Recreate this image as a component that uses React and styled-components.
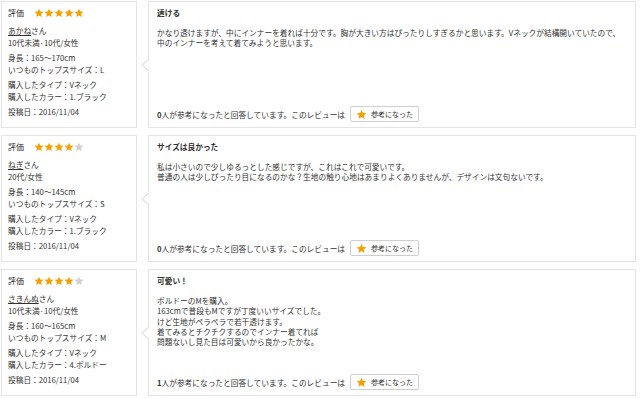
import React from "react";
import styled, { createGlobalStyle } from "styled-components";

const reviews = [
  {
    id: 1,
    rating: 5,
    name: "あかね",
    profile: "10代未満·10代/女性",
    height: "165〜170cm",
    size: "L",
    type: "Vネック",
    color: "1.ブラック",
    date: "2016/11/04",
    title: "透ける",
    body: [
      "かなり透けますが、中にインナーを着れば十分です。胸が大きい方はぴったりしすぎるかと思います。Vネックが結構開いていたので、",
      "中のインナーを考えて着てみようと思います。",
    ],
    helpful: 0,
  },
  {
    id: 2,
    rating: 4,
    name: "ねぎ",
    profile: "20代/女性",
    height: "140〜145cm",
    size: "S",
    type: "Vネック",
    color: "1.ブラック",
    date: "2016/11/04",
    title: "サイズは良かった",
    body: [
      "私は小さいので少しゆるっとした感じですが、これはこれで可愛いです。",
      "普通の人は少しぴったり目になるのかな？生地の触り心地はあまりよくありませんが、デザインは文句ないです。",
    ],
    helpful: 0,
  },
  {
    id: 3,
    rating: 4,
    name: "さきんぬ",
    profile: "10代未満·10代/女性",
    height: "160〜165cm",
    size: "M",
    type: "Vネック",
    color: "4.ボルドー",
    date: "2016/11/04",
    title: "可愛い！",
    body: [
      "ボルドーのMを購入。",
      "163cmで普段もMですが丁度いいサイズでした。",
      "けど生地がペラペラで若干透けます。",
      "着てみるとチクチクするのでインナー着てれば",
      "問題ないし見た目は可愛いから良かったかな。",
    ],
    helpful: 1,
  },
];

const Star = ({ size = 10, on = true }) => (
  <svg width={size} height={size} viewBox="0 0 24 24">
    <path
      d="M12 1.5l3.1 7.1 7.6.6-5.8 5 1.8 7.5L12 17.7l-6.7 4 1.8-7.5-5.8-5 7.6-.6z"
      fill={on ? "#f6a000" : "#d0d0d0"}
    />
  </svg>
);

const App = () => {
  return (
    <>
      <GlobalStyle />
      <StList>
        {reviews.map((r) => (
          <StRow key={r.id}>
            <StProfile>
              <StRating>
                <span>評価</span>
                <StStars>
                  {[1, 2, 3, 4, 5].map((n) => (
                    <Star key={n} on={n <= r.rating} />
                  ))}
                </StStars>
              </StRating>
              <StGroup $first>
                <div>
                  <StName href="#">{r.name}</StName>さん
                </div>
                <div>{r.profile}</div>
              </StGroup>
              <StGroup>
                <div>身長：{r.height}</div>
                <div>いつものトップスサイズ：{r.size}</div>
              </StGroup>
              <StGroup>
                <div>購入したタイプ：{r.type}</div>
                <div>購入したカラー：{r.color}</div>
              </StGroup>
              <StGroup>
                <div>投稿日：{r.date}</div>
              </StGroup>
            </StProfile>
            <StReview>
              <StTitle>{r.title}</StTitle>
              <StBody>
                {r.body.map((line, i) => (
                  <div key={i}>{line}</div>
                ))}
              </StBody>
              <StFooter>
                <span>
                  <b>{r.helpful}</b>人が参考になったと回答しています。このレビューは
                </span>
                <StHelpButton>
                  <Star size={11} />
                  <span>参考になった</span>
                </StHelpButton>
              </StFooter>
            </StReview>
          </StRow>
        ))}
      </StList>
    </>
  );
};

export default App;

const GlobalStyle = createGlobalStyle`
  body {
    margin: 0;
    background: #fff;
    color: #333;
    font-family: "Noto Sans CJK JP", "Noto Sans", sans-serif;
    font-size: 7.7px;
  }
`;

const StList = styled.div`
  display: flex;
  flex-direction: column;
  gap: 7px;
  padding: 1px 4px 0 1px;
`;

const StRow = styled.div`
  display: flex;
  gap: 11px;
  min-height: 127px;
`;

const StProfile = styled.div`
  width: 136px;
  box-sizing: border-box;
  border: 1.5px solid #e4e4e4;
  padding: 5px 6px 7px 6px;
  line-height: 12px;
`;

const StRating = styled.div`
  display: flex;
  align-items: center;
  gap: 10px;
  font-size: 8px;
`;

const StStars = styled.div`
  display: flex;
  align-items: center;
`;

const StGroup = styled.div`
  margin-top: ${({ $first }) => ($first ? "6px" : "3px")};
`;

const StName = styled.a`
  color: #333;
  text-decoration: underline;
`;

const StReview = styled.div`
  flex: 1;
  position: relative;
  display: flex;
  flex-direction: column;
  border: 1.5px solid #e4e4e4;
  padding: 5px 8px 5px 8px;

  &::before,
  &::after {
    content: "";
    position: absolute;
    top: 50%;
    width: 0;
    height: 0;
    border-style: solid;
    transform: translateY(-50%);
  }
  &::before {
    left: -8px;
    border-width: 7px 8px 7px 0;
    border-color: transparent #e4e4e4 transparent transparent;
  }
  &::after {
    left: -6px;
    border-width: 6px 7px 6px 0;
    border-color: transparent #fff transparent transparent;
  }
`;

const StTitle = styled.div`
  font-weight: bold;
  line-height: 12px;
`;

const StBody = styled.div`
  margin-top: 9px;
  line-height: 10.3px;
`;

const StFooter = styled.div`
  margin-top: auto;
  display: flex;
  align-items: center;
  gap: 5px;
`;

const StHelpButton = styled.button`
  display: flex;
  align-items: center;
  gap: 4px;
  height: 16px;
  padding: 0 5px;
  background: #fff;
  border: 1px solid #cfcfcf;
  border-radius: 2px;
  color: #333;
  font-family: inherit;
  font-size: 7px;
  cursor: pointer;
`;
